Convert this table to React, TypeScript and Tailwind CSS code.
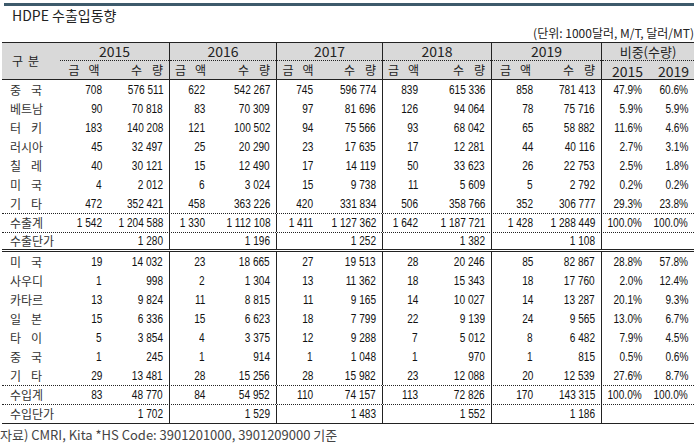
const kr = "font-['Noto_Sans_CJK_KR','Noto_Sans',sans-serif]";
const num = "font-['Liberation_Sans',sans-serif]";

const groups = [
  { year: "2015", w: "w-[110px]", a: "w-[48px]", q: "w-[62px]" },
  { year: "2016", w: "w-[107px]", a: "w-[41px]", q: "w-[66px]" },
  { year: "2017", w: "w-[106px]", a: "w-[42px]", q: "w-[64px]" },
  { year: "2018", w: "w-[109px]", a: "w-[41px]", q: "w-[68px]" },
  { year: "2019", w: "w-[110px]", a: "w-[47px]", q: "w-[63px]" },
];

type Row = { label: string; v: string[][]; p: string[] };

const exportRows: Row[] = [
  { label: "중국", v: [["708", "576 511"], ["622", "542 267"], ["745", "596 774"], ["839", "615 336"], ["858", "781 413"]], p: ["47.9%", "60.6%"] },
  { label: "베트남", v: [["90", "70 818"], ["83", "70 309"], ["97", "81 696"], ["126", "94 064"], ["78", "75 716"]], p: ["5.9%", "5.9%"] },
  { label: "터키", v: [["183", "140 208"], ["121", "100 502"], ["94", "75 566"], ["93", "68 042"], ["65", "58 882"]], p: ["11.6%", "4.6%"] },
  { label: "러시아", v: [["45", "32 497"], ["25", "20 290"], ["23", "17 635"], ["17", "12 281"], ["44", "40 116"]], p: ["2.7%", "3.1%"] },
  { label: "칠레", v: [["40", "30 121"], ["15", "12 490"], ["17", "14 119"], ["50", "33 623"], ["26", "22 753"]], p: ["2.5%", "1.8%"] },
  { label: "미국", v: [["4", "2 012"], ["6", "3 024"], ["15", "9 738"], ["11", "5 609"], ["5", "2 792"]], p: ["0.2%", "0.2%"] },
  { label: "기타", v: [["472", "352 421"], ["458", "363 226"], ["420", "331 834"], ["506", "358 766"], ["352", "306 777"]], p: ["29.3%", "23.8%"] },
];
const exportTotal: Row = { label: "수출계", v: [["1 542", "1 204 588"], ["1 330", "1 112 108"], ["1 411", "1 127 362"], ["1 642", "1 187 721"], ["1 428", "1 288 449"]], p: ["100.0%", "100.0%"] };
const exportPrice: Row = { label: "수출단가", v: [["", "1 280"], ["", "1 196"], ["", "1 252"], ["", "1 382"], ["", "1 108"]], p: ["", ""] };

const importRows: Row[] = [
  { label: "미국", v: [["19", "14 032"], ["23", "18 665"], ["27", "19 513"], ["28", "20 246"], ["85", "82 867"]], p: ["28.8%", "57.8%"] },
  { label: "사우디", v: [["1", "998"], ["2", "1 304"], ["13", "11 362"], ["18", "15 343"], ["18", "17 760"]], p: ["2.0%", "12.4%"] },
  { label: "카타르", v: [["13", "9 824"], ["11", "8 815"], ["11", "9 165"], ["14", "10 027"], ["14", "13 287"]], p: ["20.1%", "9.3%"] },
  { label: "일본", v: [["15", "6 336"], ["15", "6 623"], ["18", "7 799"], ["22", "9 139"], ["24", "9 565"]], p: ["13.0%", "6.7%"] },
  { label: "타이", v: [["5", "3 854"], ["4", "3 375"], ["12", "9 288"], ["7", "5 012"], ["8", "6 482"]], p: ["7.9%", "4.5%"] },
  { label: "중국", v: [["1", "245"], ["1", "914"], ["1", "1 048"], ["1", "970"], ["1", "815"]], p: ["0.5%", "0.6%"] },
  { label: "기타", v: [["29", "13 481"], ["28", "15 256"], ["28", "15 982"], ["23", "12 088"], ["20", "12 539"]], p: ["27.6%", "8.7%"] },
];
const importTotal: Row = { label: "수입계", v: [["83", "48 770"], ["84", "54 952"], ["110", "74 157"], ["113", "72 826"], ["170", "143 315"]], p: ["100.0%", "100.0%"] };
const importPrice: Row = { label: "수입단가", v: [["", "1 702"], ["", "1 529"], ["", "1 483"], ["", "1 552"], ["", "1 186"]], p: ["", ""] };

function Label({ text }: { text: string }) {
  // two-letter names are spread over the width of three letters
  if (text.length === 2) {
    return (
      <div className={`flex w-[58px] items-center pl-[8px] text-[12px] text-[#333] ${kr}`}>
        <div className="flex w-[32px] justify-between">
          <span>{text[0]}</span>
          <span>{text[1]}</span>
        </div>
      </div>
    );
  }
  return (
    <div className={`flex w-[58px] items-center pl-[8px] text-[12px] text-[#333] ${kr}`}>
      {text}
    </div>
  );
}

// narrow digits, squeezed toward the right edge like the sheet's bitmap font
function Num({ children }: { children: string }) {
  return <span className={`inline-block origin-right scale-x-[0.84] whitespace-nowrap text-[12px] text-[#111] ${num}`}>{children}</span>;
}

function DataRow({ row, className = "" }: { row: Row; className?: string }) {
  return (
    <div className={`flex h-[19px] ${className}`}>
      <Label text={row.label} />
      {groups.map((g, i) => (
        <div key={g.year} className="flex">
          <div className={`${g.a} flex items-center justify-end pr-[6px]`}>
            <Num>{row.v[i][0]}</Num>
          </div>
          <div className={`${g.q} flex items-center justify-end border-r border-[#222] pr-[6px]`}>
            <Num>{row.v[i][1]}</Num>
          </div>
        </div>
      ))}
      <div className="flex w-[46px] items-center justify-end pr-[6px]">
        <Num>{row.p[0]}</Num>
      </div>
      <div className="flex w-[46px] items-center justify-end pr-[6px]">
        <Num>{row.p[1]}</Num>
      </div>
    </div>
  );
}

function Header() {
  return (
    <div className={`flex h-[38px] border-t border-b border-[#222] border-b-dotted bg-[#d9d9d9] text-[12px] text-[#222] ${kr}`}>
      <div className="flex w-[58px] items-center pl-[10px]">
        <div className="flex w-[27px] justify-between">
          <span>구</span>
          <span>분</span>
        </div>
      </div>
      {groups.map((g) => (
        <div key={g.year} className={`${g.w} flex flex-col border-r border-[#222]`}>
          <div className="flex h-[18px] items-center justify-center border-b border-dotted border-[#222] text-[14px]">
            {g.year}
          </div>
          <div className="flex flex-1">
            <div className={`${g.a} flex items-center justify-center`}>
              <div className="flex w-[31px] justify-between">
                <span>금</span>
                <span>액</span>
              </div>
            </div>
            <div className="flex flex-1 items-center justify-end pr-[6px]">
              <div className="flex w-[32px] justify-between">
                <span>수</span>
                <span>량</span>
              </div>
            </div>
          </div>
        </div>
      ))}
      <div className="flex w-[92px] flex-col">
        <div className="flex h-[18px] items-center justify-center border-b border-dotted border-[#222] text-[13px]">
          비중(수량)
        </div>
        <div className="flex flex-1 text-[14px]">
          <div className="flex w-[46px] items-center justify-end pr-[5px]">2015</div>
          <div className="flex w-[46px] items-center justify-end pr-[5px]">2019</div>
        </div>
      </div>
    </div>
  );
}

export default function App() {
  return (
    <div className="h-[443px] w-[698px] overflow-hidden bg-white">
      <div className="ml-[4px] mt-[3px] h-[3px] w-[690px] bg-[#3d5a6b]" />
      <div className={`flex h-[18px] items-center pl-[12px] text-[14px] text-[#222] ${kr}`}>HDPE 수출입동향</div>
      <div className={`flex h-[18px] items-center justify-end pr-[4px] text-[12px] text-[#222] ${kr}`}>
        (단위: 1000달러, M/T, 달러/MT)
      </div>

      <div className="ml-[2px] w-[692px]">
        <Header />
        {exportRows.map((r, i) => (
          <DataRow key={"e" + i} row={r} />
        ))}
        <DataRow row={exportTotal} className="h-[20px] border-t border-b border-dotted border-t-solid border-[#222]" />
        <DataRow row={exportPrice} className="h-[17px] border-b-[3px] border-double border-[#222]" />
        {importRows.map((r, i) => (
          <DataRow key={"i" + i} row={r} />
        ))}
        <DataRow row={importTotal} className="h-[20px] border-t border-b border-dotted border-t-solid border-[#222]" />
        <DataRow row={importPrice} className="h-[17px] border-b border-[#222]" />
      </div>

      <div className={`flex h-[21px] items-center text-[13px] leading-none text-[#444] ${kr}`}>
        자료) CMRI, Kita *HS Code: 3901201000, 3901209000 기준
      </div>
    </div>
  );
}
